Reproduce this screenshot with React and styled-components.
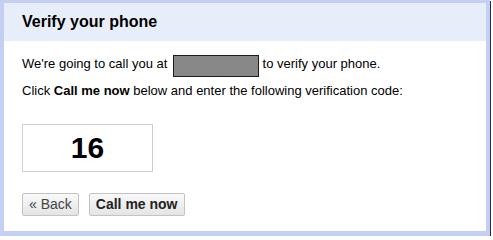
import React from 'react'
import styled, { createGlobalStyle } from 'styled-components'

const GlobalStyle = createGlobalStyle`
  html, body {
    margin: 0;
    padding: 0;
    background: #fff;
  }
  body {
    font-family: "Liberation Sans", Arial, sans-serif;
    color: #000;
  }
`

const Frame = styled.div`
  box-sizing: border-box;
  width: 490px;
  height: 236px;
  border: 4px solid #c3d0f3;
  border-top-width: 3px;
  border-bottom-width: 5px;
  box-shadow: 1px 1px 0 #2b2b36;
  background: #fff;
`

const Header = styled.h2`
  margin: 0;
  height: 38px;
  line-height: 38px;
  padding-left: 18px;
  background: #e8eef9;
  font-size: 16px;
  font-weight: bold;
`

const Body = styled.div`
  padding: 14px 18px 0;
`

const Line = styled.p`
  margin: 0 0 ${(p) => p.gap || 0}px;
  font-size: 13px;
  line-height: 16px;
`

const Redacted = styled.span`
  display: inline-block;
  box-sizing: border-box;
  width: 86px;
  height: 22px;
  margin-left: 2px;
  vertical-align: -9px;
  background: #888;
  border: 1px solid #1e1e1e;
`

const CodeBox = styled.div`
  box-sizing: border-box;
  width: 131px;
  height: 48px;
  margin-top: 25px;
  border: 1px solid #c6d0da;
  display: flex;
  align-items: center;
  justify-content: center;
  font-size: 30px;
  font-weight: bold;
`

const Actions = styled.div`
  display: flex;
  gap: 10px;
  margin-top: 21px;
`

const Button = styled.button`
  box-sizing: border-box;
  height: 23px;
  padding: 0 6px;
  border: 1px solid #c3c3c3;
  border-radius: 2px;
  background: linear-gradient(#f9f9f9, #e4e4e4);
  font-family: "Liberation Sans", Arial, sans-serif;
  font-size: 14px;
  font-weight: ${(p) => (p.primary ? 'bold' : 'normal')};
  color: ${(p) => (p.primary ? '#222' : '#444')};
  line-height: 21px;
  cursor: pointer;
`

export default function App() {
  return (
    <>
      <GlobalStyle />
      <Frame>
        <Header>Verify your phone</Header>
        <Body>
          <Line gap={6}>
            We're going to call you at <Redacted /> to verify your phone.
          </Line>
          <Line>
            Click <b>Call me now</b> below and enter the following verification code:
          </Line>
          <CodeBox>16</CodeBox>
          <Actions>
            <Button>« Back</Button>
            <Button primary>Call me now</Button>
          </Actions>
        </Body>
      </Frame>
    </>
  )
}
